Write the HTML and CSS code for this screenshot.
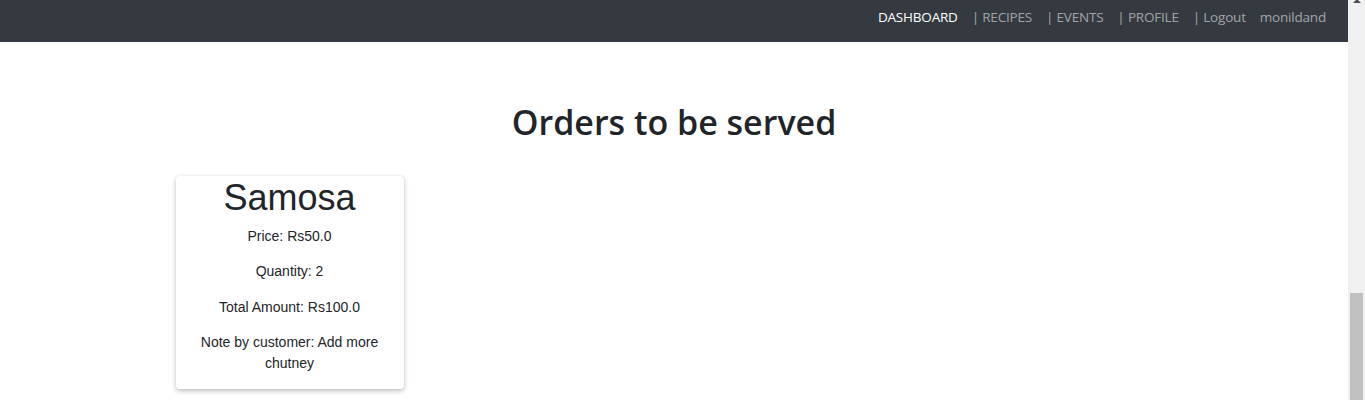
FILE: index.html
```html
<!DOCTYPE html>
<html>
<head>
<meta charset="utf-8">
<link rel="stylesheet" href="styles.css">
</head>
<body>
<div class="page">
  <nav class="navbar">
    <ul class="nav">
      <li><a class="nav-link active" href="#">DASHBOARD</a></li>
      <li><a class="nav-link" href="#">| RECIPES</a></li>
      <li><a class="nav-link" href="#">| EVENTS</a></li>
      <li><a class="nav-link" href="#">| PROFILE</a></li>
      <li><a class="nav-link" href="#">| Logout</a></li>
      <li><span class="nav-link">monildand</span></li>
    </ul>
  </nav>
  <main class="main">
    <h2 class="title">Orders to be served</h2>
    <div class="orders">
      <div class="card">
        <h1 class="dish">Samosa</h1>
        <p>Price: Rs50.0</p>
        <p>Quantity: 2</p>
        <p>Total Amount: Rs100.0</p>
        <p>Note by customer: Add more chutney</p>
      </div>
    </div>
  </main>
</div>
<div class="scrollbar">
  <div class="arrow"></div>
  <div class="thumb"></div>
</div>
</body>
</html>
```
FILE: styles.css
```css
body {
  margin: 0;
  height: 400px;
  overflow: hidden;
  display: flex;
  font-family: "Open Sans", "Noto Sans", sans-serif;
  color: #212529;
  background: #fff;
}
.page { flex: 1; min-width: 0; }
.scrollbar {
  width: 17px;
  background: #f1f1f1;
  display: flex;
  flex-direction: column;
  align-items: center;
  justify-content: space-between;
}
.arrow {
  width: 0;
  height: 0;
  margin-top: -1px;
  border-left: 4px solid transparent;
  border-right: 4px solid transparent;
  border-bottom: 4px solid #505050;
}
.thumb {
  width: 13px;
  height: 107px;
  background: #c1c1c1;
}
.navbar {
  height: 42px;
  box-sizing: border-box;
  background: #343a40;
  display: flex;
  justify-content: flex-end;
  align-items: flex-start;
  padding: 7px 15px 0;
}
.nav {
  list-style: none;
  margin: 0;
  padding: 0;
  display: flex;
}
.nav-link {
  display: block;
  padding: 0 7px;
  font-size: 13.5px;
  line-height: 20px;
  color: rgba(255,255,255,0.55);
  text-decoration: none;
  letter-spacing: -0.2px;
}
.nav-link.active { color: #fff; }
.main { padding-top: 60px; }
.title {
  margin: 0 0 33px;
  text-align: center;
  font-size: 34px;
  font-weight: 600;
  line-height: 1.2;
}
.orders {
  width: 1000px;
  margin: 0 auto;
  display: flex;
  padding-left: 3px;
}
.card {
  width: 200px;
  padding: 0 14px 1px;
  border-radius: 3px;
  box-shadow: 0 2px 5px rgba(0,0,0,0.25), 0 0 1px rgba(0,0,0,0.15);
  text-align: center;
  font-family: "Liberation Sans", Arial, sans-serif;
  font-size: 14px;
  line-height: 21px;
}
.dish {
  margin: 0 0 7px;
  font-weight: 400;
  font-size: 36px;
  line-height: 43px;
}
.card p { margin: 0 0 14px; }
.card p:nth-child(3) { margin-bottom: 15px; }
```
